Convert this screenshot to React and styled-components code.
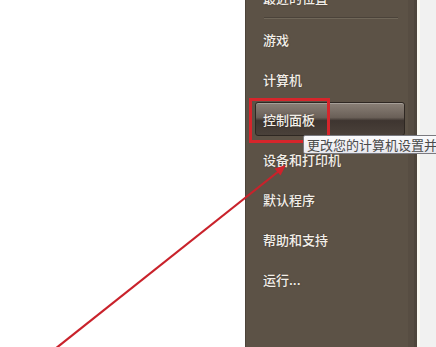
import React from "react";
import styled, { createGlobalStyle } from "styled-components";

const GlobalStyle = createGlobalStyle`
  html, body {
    margin: 0;
    padding: 0;
    background: #ffffff;
    overflow: hidden;
  }
`;

const Page = styled.div`
  position: relative;
  display: flex;
  width: 436px;
  height: 347px;
  overflow: hidden;
  font-family: "Noto Sans CJK SC", "Noto Sans", sans-serif;
`;

const Blank = styled.div`
  width: 245px;
  background: #ffffff;
`;

const Panel = styled.div`
  width: 172px;
  box-sizing: border-box;
  background: #5c5246;
  border-left: 1px solid #4c4339;
  border-right: 3px solid #4f463c;
  box-shadow: inset -6px 0 0 #574d42;
`;

const Edge = styled.div`
  flex: 1;
  background: #f1f1f1;
  border-left: 3px solid #fbf9f1;
`;

const Menu = styled.ul`
  list-style: none;
  margin: -23px 0 0;
  padding: 0;
  display: flex;
  flex-direction: column;
`;

const Item = styled.li`
  position: relative;
  height: 40px;
  box-sizing: border-box;
  padding: 3px 9px 3px 9px;
  display: flex;
`;

const Label = styled.div`
  flex: 1;
  display: flex;
  align-items: center;
  padding-left: 7px;
  border-radius: 3px;
  font-size: 13px;
  font-weight: 500;
  color: #f3efe9;
  text-shadow: 0 0 2px rgba(0, 0, 0, 0.35);
  border: 1px solid ${(p) => (p.active ? "#2e2722" : "transparent")};
  background: ${(p) =>
    p.active
      ? "linear-gradient(to bottom, #8a8077 0%, #6a6058 45%, #3e3530 55%, #4a413a 100%)"
      : "transparent"};
  box-shadow: ${(p) =>
    p.active ? "inset 0 1px 0 rgba(255,255,255,0.25)" : "none"};
`;

const Separator = styled.li`
  height: 0;
  margin: 0 16px 0 18px;
  border-top: 1px solid #4b433a;
  border-bottom: 1px solid #706759;
`;

const Marker = styled.div`
  position: absolute;
  left: 3px;
  top: -1px;
  width: 81px;
  height: 45px;
  box-sizing: border-box;
  border: 3px solid #d6252b;
  z-index: 2;
`;

const Tooltip = styled.div`
  position: absolute;
  left: 57px;
  top: 36px;
  height: 19px;
  box-sizing: border-box;
  padding: 0 4px 0 3px;
  display: flex;
  align-items: center;
  white-space: nowrap;
  font-size: 13px;
  color: #4a4a4a;
  background: linear-gradient(to bottom, #fbfbfd, #e8e8ee);
  border: 1px solid #7a7a80;
  border-radius: 2px;
  z-index: 3;
`;

const Arrow = styled.svg`
  position: absolute;
  left: 0;
  top: 0;
  z-index: 4;
  pointer-events: none;
`;

const items = [
  { text: "最近的位置" },
  { sep: true },
  { text: "游戏" },
  { text: "计算机" },
  { text: "控制面板", active: true, tip: "更改您的计算机设置并自定义其功能。" },
  { text: "设备和打印机" },
  { text: "默认程序" },
  { text: "帮助和支持" },
  { text: "运行..." },
];

export default function App() {
  return (
    <>
      <GlobalStyle />
      <Page>
        <Blank />
        <Panel>
          <Menu>
            {items.map((it, i) =>
              it.sep ? (
                <Separator key={i} />
              ) : (
                <Item key={i}>
                  <Label active={it.active}>{it.text}</Label>
                  {it.active && <Marker />}
                  {it.tip && <Tooltip>{it.tip}</Tooltip>}
                </Item>
              )
            )}
          </Menu>
        </Panel>
        <Edge />
        <Arrow width="436" height="347" viewBox="0 0 436 347">
          <line
            x1="55"
            y1="349"
            x2="279"
            y2="171"
            stroke="#c9222b"
            strokeWidth="2.2"
          />
          <polygon points="286,165 280.5,175.5 274.5,168.5" fill="#d0222b" />
        </Arrow>
      </Page>
    </>
  );
}
